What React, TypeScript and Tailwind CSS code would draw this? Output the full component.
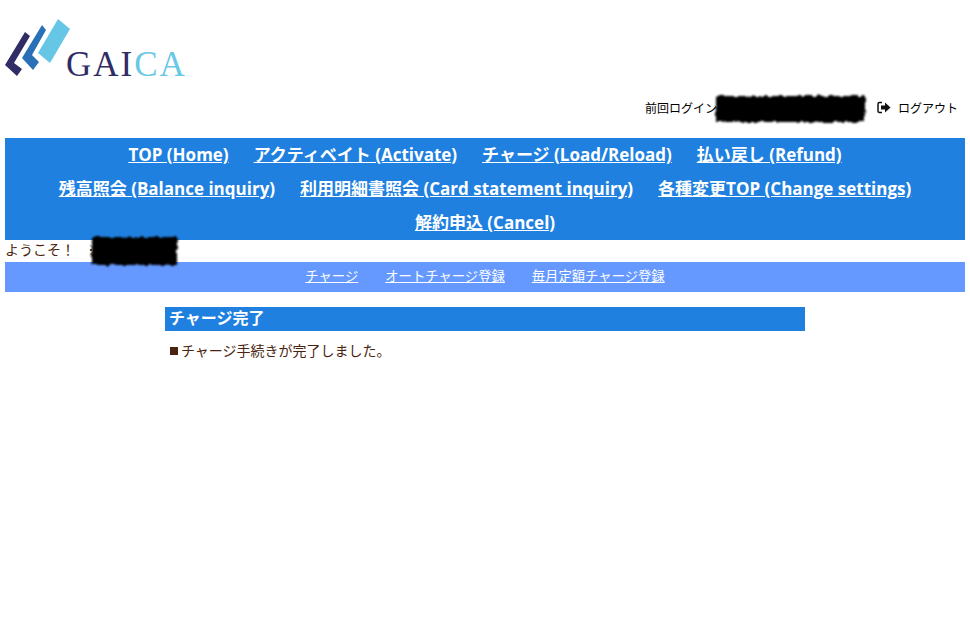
const navRows = [
  ["TOP (Home)", "アクティベイト (Activate)", "チャージ (Load/Reload)", "払い戻し (Refund)"],
  ["残高照会 (Balance inquiry)", "利用明細書照会 (Card statement inquiry)", "各種変更TOP (Change settings)"],
  ["解約申込 (Cancel)"],
];

const subLinks = ["チャージ", "オートチャージ登録", "毎月定額チャージ登録"];

const font = "font-['Liberation_Sans','Noto_Sans_CJK_JP',sans-serif]";

function Logo() {
  return (
    <div className="relative -ml-[5px] h-[90px] w-[240px]">
      <svg width="72" height="80" viewBox="0 0 72 80" className="absolute left-0 top-0">
        <polygon points="25,32 30,36 14,63 22,69 17,76 5,65" fill="#2f2c66" />
        <polygon points="42,25 46,30 32,55 39,62 33,70 22,58" fill="#2a70b6" />
        <polygon points="58,19 70,29 50,63 38,53" fill="#65c6e6" />
      </svg>
      <div className="absolute left-[66px] top-[44px] font-['Liberation_Serif',serif] text-[35px] leading-[41px] tracking-[2px] text-[#2f2c66]">
        GAI<span className="text-[#69c8e6]">CA</span>
      </div>
    </div>
  );
}

// scribbled-out area laid over the text below it
function Redaction({ className, w, h }: { className: string; w: number; h: number }) {
  const id = `rough-${w}`;
  return (
    <svg width={w} height={h} viewBox={`0 0 ${w} ${h}`} className={`absolute ${className}`}>
      <filter id={id} x="-10%" y="-30%" width="120%" height="160%">
        <feTurbulence type="fractalNoise" baseFrequency="0.18" numOctaves="2" seed="4" />
        <feDisplacementMap in="SourceGraphic" scale="5" />
        <feGaussianBlur stdDeviation="1" />
      </filter>
      <rect x="4" y="4" width={w - 8} height={h - 8} fill="#000" filter={`url(#${id})`} />
    </svg>
  );
}

export default function App() {
  return (
    <div className={`${font} mx-[5px] w-[960px] bg-white text-[13px] text-[#4a2410]`}>
      <Logo />
      <div className="relative flex h-[48px] items-start justify-end pr-[7px] pt-[9px] text-[12px] leading-[18px] text-black">
        <span className="absolute left-[640px] top-[10px]">前回ログイン</span>
        <Redaction className="left-[707px] top-[2px]" w={157} h={34} />
        <svg width="14" height="13" viewBox="0 0 14 13" className="mr-[7px] mt-[2px]">
          <path d="M5 1.5H2.5A1.5 1.5 0 0 0 1 3v7a1.5 1.5 0 0 0 1.5 1.5H5" fill="none" stroke="#111" strokeWidth="1.5" />
          <path d="M4 4.5h4V1.5L13.5 6.5 8 11.5V8.5H4z" fill="#111" />
        </svg>
        <span className="pt-[1px]">ログアウト</span>
      </div>
      <nav className="h-[102px] bg-[#2080e0] font-['Open_Sans','Noto_Sans_CJK_JP',sans-serif] text-[17px] font-bold text-white">
        {navRows.map((row, i) => (
          <div key={i} className="flex h-[34px] items-center justify-center gap-[25px] pb-[1px]">
            {row.map((label) => (
              <a key={label} href="#" className="underline">
                {label}
              </a>
            ))}
          </div>
        ))}
      </nav>
      <div className="relative h-[22px] text-[14px] leading-[20px]">
        <span>ようこそ！</span>
        <span className="ml-[13px]">※</span>
        <Redaction className="left-[83px] top-[-7px]" w={93} h={36} />
      </div>
      <div className="flex h-[30px] items-center justify-center gap-[27px] bg-[#6699ff] pb-[1px] text-[13.33px] text-white">
        {subLinks.map((label) => (
          <a key={label} href="#" className="underline">
            {label}
          </a>
        ))}
      </div>
      <main className="mx-auto mt-[15px] w-[640px]">
        <h1 className="h-[24px] bg-[#2080e0] pl-[4px] text-[16px] font-bold leading-[23px] text-white">チャージ完了</h1>
        <p className="mt-[10px] flex items-center pl-[5px] text-[14px] leading-[20px]">
          <span className="mr-[3px] h-[8px] w-[8px] bg-[#4a2410]" />
          チャージ手続きが完了しました。
        </p>
      </main>
    </div>
  );
}
